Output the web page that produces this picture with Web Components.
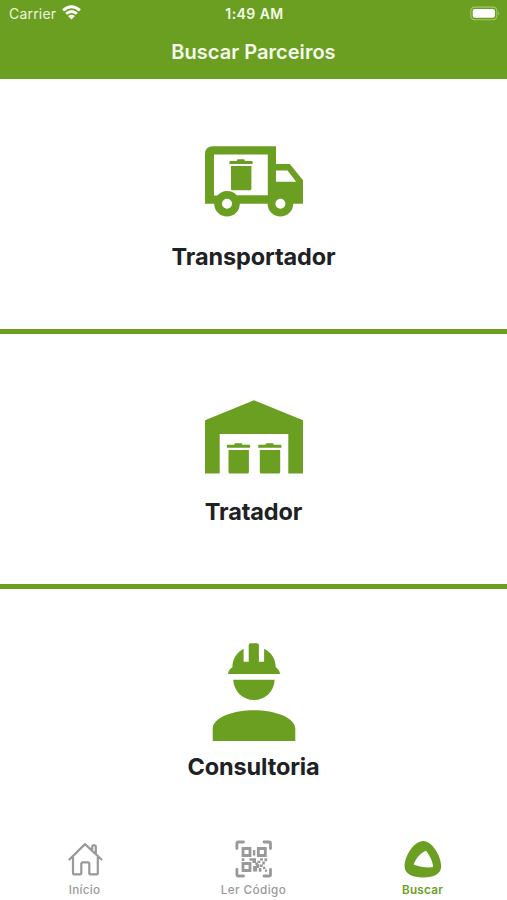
<!DOCTYPE html>
<html lang="pt-BR">
<head>
<meta charset="utf-8">
<title>Buscar Parceiros</title>
<style>
html,body{margin:0;height:100%;background:#fff}
body{--green:#6a9f22;--ink:#202124;--muted:#999;font-family:Inter,"Liberation Sans",sans-serif;overflow:hidden}
</style>
</head>
<body>
<partner-app></partner-app>
<script>
const define = (name, markup) => customElements.define(name, class extends HTMLElement {
  constructor() {
    super();
    this.attachShadow({ mode: 'open' }).innerHTML = markup;
  }
});

define('status-bar', `
<style>
:host{display:grid;grid-template-columns:1fr auto 1fr;align-items:center;height:27px;padding:0 7px 0 9px;color:#f4f9e9;font-size:14px;line-height:27px}
.left{display:flex;align-items:center;gap:6px;letter-spacing:.2px;color:#edf5dd}
.time{font-weight:600;letter-spacing:.45px}
.right{display:flex;justify-content:flex-end}
svg{display:block}
.wifi{margin-top:-2px}
</style>
<div class="left"><span>Carrier</span>
<svg class="wifi" width="19" height="15" viewBox="0 0 19 15" fill="none" stroke="#fff" stroke-width="2.8"><path d="M1.1 5.4Q9.5-2 17.9 5.4M4.1 8.8Q9.5 4.2 14.9 8.8"/><path d="M6.1 11.1Q9.5 8.3 12.9 11.1L9.5 14.5Z" fill="#fff" stroke="none"/></svg></div>
<div class="time">1:49 AM</div>
<div class="right"><svg width="30" height="15" viewBox="0 0 30 15"><rect x=".8" y="1.1" width="26" height="12.6" rx="3.6" fill="none" stroke="#a3c86c" stroke-width="1.1"/><rect x="2.7" y="3" width="22.2" height="8.8" rx="2" fill="#fff"/><path d="M28.2 5.5q2 1.9 0 3.8z" fill="#a3c86c"/></svg></div>
`);

define('nav-header', `
<style>
:host{display:block;height:79px;background:var(--green)}
h1{margin:0;height:50px;line-height:50px;text-align:center;font-size:20px;font-weight:600;color:#f6faed;letter-spacing:.03px}
</style>
<status-bar></status-bar><h1><slot></slot></h1>
`);

define('partner-panel', `
<style>
:host{display:flex;flex-direction:column;align-items:center;justify-content:flex-end;box-sizing:border-box;height:255px;padding-bottom:54px;border-bottom:5px solid var(--green);background:#fff}
:host([last]){border-color:transparent}
.art{display:flex;height:98px;margin-bottom:9px;align-items:center;color:var(--green)}
h2{margin:0;height:36px;line-height:36px;font-size:23.5px;font-weight:700;color:var(--ink);letter-spacing:-.12px}
</style>
<div class="art"><slot name="art"></slot></div><h2><slot></slot></h2>
`);

const bin = (x, y, h) => `<path d="M${x} ${y+2.4}q0-.8.8-.8H${x+7.2}l1-1.6h6.5l1 1.6h6.7q.8 0 .8.8v2.2H${x}zM${x+1.6} ${y+6.8}h20.4v${h-8.4}q0 1.6-1.6 1.6H${x+3.2}q-1.6 0-1.6-1.6z"/>`;

define('truck-icon', `
<style>:host,svg{display:block}</style>
<svg width="100" height="98" viewBox="204 132 100 98" fill="currentColor">
<path fill-rule="evenodd" d="M213 146.2H276V164h13.8L303 180.3v23.4h-9.8a12.8 12.8 0 0 1-25.6 0H239.8a12.8 12.8 0 0 1-25.6 0H205V154.2q0-8 8-8zM214 154.4V195.6h3.3a12.8 12.8 0 0 1 19.4-.4H267.8V154.4zM276 170.6v11.2h20.2l-8.7-11.2zM232 203.7a5 5 0 1 0-10 0 5 5 0 1 0 10 0M285.4 203.7a5 5 0 1 0-10 0 5 5 0 1 0 10 0"/>
${bin(229.4,159.3,31)}
</svg>`);

define('warehouse-icon', `
<style>:host,svg{display:block}</style>
<svg width="100" height="98" viewBox="204 387 100 98" fill="currentColor">
<path d="M205 420.3L254 400.3 303 420.3V473.6H288.3V434H219.7V473.6H205z"/>
${bin(226.9,443.2,30.4)}${bin(258.2,443.2,30.4)}
</svg>`);

define('worker-icon', `
<style>:host,svg{display:block}</style>
<svg width="100" height="100" viewBox="204 641 100 100" fill="currentColor">
<path d="M248.7 661.8V645.2q0-1.9 1.9-1.9h6.4q1.9 0 1.9 1.9v16.6h5.2V648.8C271.4 652 275.7 659.5 275.7 667.3q3.7 2 4.3 6.8H228q.6-4.8 4.4-6.8C232.4 659.5 236.8 652 243.6 648.8v13z"/>
<path d="M233.2 679.8h41.5C274 692 265 700.1 254 700.1S234 692 233.2 679.8zM212.7 741V729C212.7 717.5 233 710.3 254 710.3S295.3 717.5 295.3 729V741z"/>
</svg>`);

define('tab-item', `
<style>
:host{display:flex;flex-direction:column;align-items:center;flex:1;padding-top:6px;color:var(--muted);font-size:11.7px;font-weight:500}
:host([active]){color:var(--green);font-weight:600}
span{line-height:16px;margin-top:3px;letter-spacing:var(--track,0)}
</style>
<slot name="icon"></slot><span><slot></slot></span>
`);

define('home-icon', `
<style>:host,svg{display:block}</style>
<svg width="40" height="40" viewBox="65 839.5 40 40" fill="none" stroke="currentColor" stroke-width="2.2" stroke-linejoin="round" stroke-linecap="round"><path d="M69.4 860L85 844.6 101.5 860M73 857.5V873.4q0 1.4 1.4 1.4H79.9q1.4 0 1.4-1.4V864.4q0-1.6 1.6-1.6h4.8q1.6 0 1.6 1.6V873.4q0 1.4 1.4 1.4H96.4q1.4 0 1.4-1.4V857.5M92.2 850.5V847q0-1.2 1.2-1.2h1.2q1.2 0 1.2 1.2V854.3"/></svg>`);

define('qr-icon', `
<style>:host,svg{display:block}</style>
<svg width="40" height="40" viewBox="234.5 839.5 40 40"><g fill="none" stroke="currentColor" stroke-width="2.8"><path stroke-linecap="round" stroke-linejoin="round" d="M237.4 849V844q0-1.5 1.5-1.5H244M264.5 842.5h5q1.5 0 1.5 1.5V849M271 870v5q0 1.5-1.5 1.5H264.5M244 876.5h-5q-1.6 0-1.6-1.5V870"/><path d="M243.5 849h7v7h-7zM258.8 849h7v7h-7zM243.5 864h7v7h-7z"/></g>
<path fill="currentColor" d="M253.4 850.5h2.4v5.5h-2.4zM242.3 858.8h2.6v2.6h-2.6zM250 858.8h6.5v4.2h2v2.5h-2.7v-2H253v-2.2h-3zM260.5 858.8h3v2.3h-3zM265 858.8h2.6v3H265zM258 861.2h2.7v2.4H258zM262.8 862h2.5v3h-2.5zM260.2 865h3v2.5h-3zM253.6 866.5h3v-2h3v4h-2v3.6H253.6zM259.3 868.5h2.6v3.8h-2.6zM263.5 867.2h2.4v2.4h-2.4zM265.4 870h2.2v2.3h-2.2z"/></svg>`);

define('search-icon', `
<style>:host,svg{display:block}</style>
<svg width="40" height="40" viewBox="402.5 839.5 40 40"><path fill="currentColor" fill-rule="evenodd" d="M422.8 841.4C431.5 841.4 440.7 856.5 440.7 866.5 440.7 874.5 433.5 877.9 422.8 877.9 411.5 877.9 404.1 874.5 404.1 866.5 404.1 856.5 413.5 841.4 422.8 841.4zM424.8 851.4C420 853.2 414.6 859.8 413.2 865.3 418.5 867.3 426 868.3 431.8 867.8Q432.8 867.6 432.5 866 431.5 859.5 426.2 852 425.6 851.2 424.8 851.4z"/></svg>`);

define('tab-bar', `
<style>:host{display:flex;height:67px;background:#fff}</style>
<slot></slot>
`);

define('partner-app', `
<style>:host{display:flex;flex-direction:column;width:507px;height:900px;overflow:hidden;background:#fff}main{height:754px;flex:none}nav-header{flex:none}</style>
<nav-header>Buscar Parceiros</nav-header>
<main>
<partner-panel><truck-icon slot="art"></truck-icon>Transportador</partner-panel>
<partner-panel><warehouse-icon slot="art"></warehouse-icon>Tratador</partner-panel>
<partner-panel last><worker-icon slot="art"></worker-icon>Consultoria</partner-panel>
</main>
<tab-bar>
<tab-item style="--track:.3px"><home-icon slot="icon"></home-icon>Início</tab-item>
<tab-item style="--track:.42px"><qr-icon slot="icon"></qr-icon>Ler Código</tab-item>
<tab-item active style="--track:.25px"><search-icon slot="icon"></search-icon>Buscar</tab-item>
</tab-bar>
`);
</script>
</body>
</html>
